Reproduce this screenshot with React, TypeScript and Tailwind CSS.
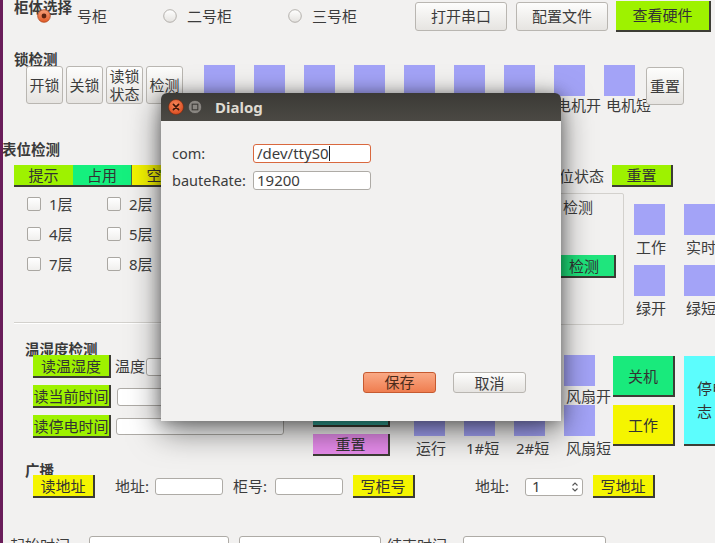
import React from "react";

type P = { children?: React.ReactNode; className?: string };

// Ubuntu-style push button
function QBtn({ children, className = "" }: P) {
  return (
    <div
      className={`flex shrink-0 items-center justify-center rounded-[3px] border border-[#b9b6b1] bg-gradient-to-b from-[#fdfdfc] to-[#e6e4e1] text-[15px] leading-[18px] text-[#3c3c3c] ${className}`}
    >
      {children}
    </div>
  );
}

// flat coloured button with dark lower-right edge
function CBtn({ children, className = "" }: P) {
  return (
    <div
      className={`flex shrink-0 items-center justify-center border-b-2 border-r-2 border-[#3d3d35] text-[15px] leading-[18px] text-[#333] ${className}`}
    >
      {children}
    </div>
  );
}

function Field({ className = "", children }: P) {
  return (
    <div
      className={`flex shrink-0 items-center rounded-[3px] border border-[#aeaba6] bg-white px-[3px] text-[15px] text-[#3c3c3c] ${className}`}
    >
      {children}
    </div>
  );
}

function Radio({ checked = false, className = "" }: { checked?: boolean; className?: string }) {
  return (
    <svg width="14" height="14" viewBox="0 0 14 14" className={`relative z-10 shrink-0 ${className}`}>
      <defs>
        <linearGradient id="ro" x1="0" y1="0" x2="0" y2="1">
          <stop offset="0" stopColor="#f7a07a" />
          <stop offset="1" stopColor="#e15a27" />
        </linearGradient>
        <linearGradient id="rw" x1="0" y1="0" x2="0" y2="1">
          <stop offset="0" stopColor="#ffffff" />
          <stop offset="1" stopColor="#e4e2df" />
        </linearGradient>
      </defs>
      {checked ? (
        <>
          <circle cx="7" cy="7" r="6.3" fill="url(#ro)" stroke="#b04a20" strokeWidth="0.8" />
          <circle cx="7" cy="7" r="2.4" fill="#5b2310" />
        </>
      ) : (
        <circle cx="7" cy="7" r="6.3" fill="url(#rw)" stroke="#a3a09b" strokeWidth="0.8" />
      )}
    </svg>
  );
}

function Check({ label }: { label: string }) {
  return (
    <div className="flex items-center">
      <div className="h-[14px] w-[14px] shrink-0 rounded-[2px] border border-[#aaa7a2] bg-gradient-to-b from-white to-[#f0efed]" />
      <span className="ml-[8px] leading-[14px]">{label}</span>
    </div>
  );
}

function Sq({ className = "" }: { className?: string }) {
  return <div className={`h-[31px] w-[31px] shrink-0 bg-[#a3a3f7] ${className}`} />;
}

function SqLabel({ children, className = "" }: P) {
  return <div className={`h-[16px] w-[31px] whitespace-nowrap pl-[2px] leading-[16px] ${className}`}>{children}</div>;
}

function Title({ children, className = "" }: P) {
  return <div className={`h-[14px] shrink-0 text-[14.5px] font-bold leading-[14px] text-[#3a3a3a] ${className}`}>{children}</div>;
}

function Dialog() {
  return (
    <div className="absolute left-[161px] top-[93px] z-20 flex h-[328px] w-[400px] flex-col overflow-hidden rounded-t-[6px] shadow-[0_10px_32px_rgba(0,0,0,0.55),0_0_14px_rgba(0,0,0,0.3)]">
      <div className="flex h-[28px] shrink-0 items-center bg-gradient-to-b from-[#3b3a36] to-[#4b4944] pl-[7px]">
        <svg width="16" height="16" viewBox="0 0 16 16">
          <defs>
            <radialGradient id="cl" cx="0.45" cy="0.35" r="0.7">
              <stop offset="0" stopColor="#f6875a" />
              <stop offset="1" stopColor="#d9481c" />
            </radialGradient>
          </defs>
          <circle cx="8" cy="8" r="7.5" fill="url(#cl)" stroke="#6e2a12" strokeWidth="0.6" />
          <path d="M5.4 5.4 L10.6 10.6 M10.6 5.4 L5.4 10.6" stroke="#3b1508" strokeWidth="1.6" strokeLinecap="round" />
        </svg>
        <svg width="14" height="14" viewBox="0 0 14 14" className="ml-[4px]">
          <circle cx="7" cy="7" r="6.6" fill="#8a8782" stroke="#3a3935" strokeWidth="0.6" />
          <rect x="4.2" y="4.2" width="5.6" height="5.6" fill="none" stroke="#3c3b37" strokeWidth="1.1" />
        </svg>
        <span className="ml-[13px] text-[15px] font-bold text-[#dfdbd2]">Dialog</span>
      </div>
      <div className="flex flex-1 flex-col bg-[#f2f1f0] px-[11px] pt-[23px] text-[#3c3c3c]">
        <div className="flex h-[19px] items-center">
          <span className="w-[81px] text-[14.5px]">com:</span>
          <div className="flex h-[19px] w-[118px] items-center rounded-[3px] border border-[#d9683e] bg-white px-[3px] text-[15px]">
            /dev/ttyS0
            <span className="ml-px h-[15px] w-px bg-[#222]" />
          </div>
        </div>
        <div className="mt-[8px] flex h-[19px] items-center">
          <span className="w-[81px] text-[14.5px]">bauteRate:</span>
          <Field className="h-[19px] w-[118px]">19200</Field>
        </div>
        <div className="mt-[182px] flex justify-end gap-[17px] pr-[24px]">
          <div className="flex h-[21px] w-[73px] items-center justify-center rounded-[3px] border border-[#c65a30] bg-gradient-to-b from-[#f9a985] to-[#ef7d4f] text-[15px] text-[#4a2a1a]">
            保存
          </div>
          <QBtn className="h-[21px] w-[73px]">取消</QBtn>
        </div>
      </div>
    </div>
  );
}

export default function App() {
  return (
    <div className="relative flex h-[543px] w-[715px] overflow-hidden bg-[#f2f1f0] font-['Noto_Sans','Noto_Sans_CJK_SC',sans-serif] text-[15px] text-[#3c3c3c]">
      <div className="w-[3px] shrink-0 bg-[#6a1d5a]" />
      <div className="relative flex min-w-0 flex-1 flex-col pl-px">
        {/* 柜体选择 */}
        <div className="relative flex h-[32px] shrink-0 items-center">
          <span className="absolute left-[10px] top-[-2px] text-[14.5px] font-bold leading-[18px] text-[#3a3a3a]">柜体选择</span>
          <Radio checked className="ml-[33px]" />
          <span className="ml-[26px] w-[30px] whitespace-nowrap">号柜</span>
          <Radio className="ml-[56px]" />
          <span className="ml-[10px] w-[46px] whitespace-nowrap">二号柜</span>
          <Radio className="ml-[55px]" />
          <span className="ml-[10px] w-[46px] whitespace-nowrap">三号柜</span>
          <QBtn className="ml-[57px] h-[29px] w-[92px]">打开串口</QBtn>
          <QBtn className="ml-[9px] h-[29px] w-[92px]">配置文件</QBtn>
          <CBtn className="ml-[8px] h-[31px] w-[95px] bg-[#9ef200]">查看硬件</CBtn>
        </div>

        {/* 锁检测 */}
        <Title className="mt-[20px] pl-[10px]">锁检测</Title>
        <div className="flex h-[39px] shrink-0 items-start">
          <div className="ml-[22px] flex gap-[3px]">
            <QBtn className="h-[38px] w-[37px]">开锁</QBtn>
            <QBtn className="h-[38px] w-[37px]">关锁</QBtn>
            <QBtn className="h-[38px] w-[37px] flex-col">
              <span>读锁</span>
              <span>状态</span>
            </QBtn>
            <QBtn className="h-[38px] w-[37px]">检测</QBtn>
          </div>
          <div className="-mt-px ml-[21px] flex gap-[19px]">
            {["", "", "", "", "", "", "", "电机开", "电机短"].map((l, i) => (
              <div key={i} className="flex w-[31px] flex-col">
                <Sq />
                <SqLabel className="mt-px">{l}</SqLabel>
              </div>
            ))}
          </div>
          <QBtn className="ml-[11px] mt-px h-[38px] w-[38px]">重置</QBtn>
        </div>

        {/* 表位检测 */}
        <div className="-ml-[2px] mt-[36px] h-[16px] shrink-0 text-[14.5px] font-bold leading-[16px] text-[#3a3a3a]">表位检测</div>
        <div className="mt-[8px] flex h-[22px] shrink-0 items-stretch">
          <div className="ml-[10px] flex border-b-2 border-[#3d3d35]">
            <div className="flex w-[59px] items-center justify-center bg-[#9ef200] text-[#333]">提示</div>
            <div className="flex w-[59px] items-center justify-center border-r border-[#4a6a4a] bg-[#15f07e] text-[#333]">占用</div>
            <div className="flex w-[59px] items-center justify-center bg-[#f5f500] text-[#333]">空闲</div>
          </div>
          <span className="ml-[368px] w-[44px] self-center whitespace-nowrap">位状态</span>
          <CBtn className="ml-[9px] w-[61px] bg-[#9ef200]">重置</CBtn>
        </div>
        <div className="mt-[6px] flex h-[132px] shrink-0">
          <div className="flex w-[157px] shrink-0 flex-col">
            <div className="grid grid-cols-[80px_80px] gap-y-[16px] pl-[23px] pt-[4px]">
              {["1层", "2层", "4层", "5层", "7层", "8层"].map((l) => (
                <Check key={l} label={l} />
              ))}
            </div>
            <div className="mb-[1px] ml-[10px] mt-auto border-b border-t border-b-white border-t-[#d3d1cd]" />
          </div>
          <div className="ml-[379px] flex h-[132px] w-[84px] shrink-0 flex-col rounded-[2px] border border-[#d3d1cd]">
            <span className="pl-[22px] pt-[5px] leading-[16px]">检测</span>
            <CBtn className="ml-[13px] mt-[40px] h-[23px] w-[62px] bg-[#1fe57d]">检测</CBtn>
          </div>
          <div className="ml-[10px] flex gap-[19px]">
            {[
              ["工作", "绿开"],
              ["实时", "绿短"],
            ].map(([a, b]) => (
              <div key={a} className="flex w-[31px] flex-col">
                <Sq className="mt-[11px]" />
                <SqLabel className="mt-[4px]">{a}</SqLabel>
                <Sq className="mt-[10px]" />
                <SqLabel className="mt-[4px]">{b}</SqLabel>
              </div>
            ))}
          </div>
        </div>

        {/* 温湿度检测 */}
        <Title className="mt-[17px] pl-[21px]">温湿度检测</Title>
        <div className="-mt-px flex h-[101px] shrink-0 items-start">
          <div className="ml-[29px] flex w-[251px] shrink-0 flex-col gap-[7px]">
            <div className="flex items-center">
              <CBtn className="h-[23px] w-[78px] bg-[#9ef200]">读温湿度</CBtn>
              <span className="ml-[4px] w-[31px] whitespace-nowrap">温度</span>
              <Field className="h-[18px] w-[40px]" />
            </div>
            <div className="flex items-center">
              <CBtn className="h-[23px] w-[78px] bg-[#9ef200]">读当前时间</CBtn>
              <Field className="ml-[6px] h-[18px] w-[120px]" />
            </div>
            <div className="flex items-center">
              <CBtn className="h-[23px] w-[78px] bg-[#9ef200]">读停电时间</CBtn>
              <Field className="ml-[5px] h-[17px] w-[168px]" />
            </div>
          </div>
          <div className="ml-[29px] flex w-[77px] shrink-0 flex-col pt-[50px]">
            <CBtn className="h-[22px] w-[77px] bg-[#36b3a3]" />
            <CBtn className="mt-[7px] h-[22px] w-[77px] bg-[#e78cec]">重置</CBtn>
          </div>
          <div className="ml-[24px] flex gap-[19px]">
            {[
              ["", "运行"],
              ["", "1#短"],
              ["", "2#短"],
              ["风扇开", "风扇短"],
            ].map(([a, b]) => (
              <div key={b} className="flex w-[31px] flex-col">
                <Sq />
                <SqLabel className="mt-[2px]">{a}</SqLabel>
                <Sq className="mt-px" />
                <SqLabel className="mt-[4px]">{b}</SqLabel>
              </div>
            ))}
          </div>
          <div className="ml-[18px] flex w-[62px] shrink-0 flex-col">
            <CBtn className="mt-px h-[41px] w-[62px] bg-[#19ea7c]">关机</CBtn>
            <CBtn className="mt-[8px] h-[41px] w-[62px] bg-[#f5f500]">工作</CBtn>
          </div>
          <div className="ml-[9px] mt-px flex h-[90px] w-[40px] shrink-0 flex-col justify-center overflow-hidden whitespace-nowrap border-b-2 border-[#3d3d35] bg-[#5cfdfd] pl-[13px] leading-[23px] text-[#333]">
            <span>停电</span>
            <span>志</span>
          </div>
        </div>

        {/* 广播 */}
        <Title className="mt-[7px] pl-[21px]">广播</Title>
        <div className="-mt-[2px] flex h-[23px] shrink-0 items-center">
          <CBtn className="ml-[29px] h-[23px] w-[62px] bg-[#f5f500]">读地址</CBtn>
          <span className="ml-[20px] w-[40px] whitespace-nowrap">地址:</span>
          <Field className="h-[17px] w-[68px]" />
          <span className="ml-[10px] w-[42px] whitespace-nowrap">柜号:</span>
          <Field className="h-[17px] w-[68px]" />
          <CBtn className="ml-[10px] h-[23px] w-[62px] bg-[#f5f500]">写柜号</CBtn>
          <span className="ml-[60px] w-[50px] whitespace-nowrap">地址:</span>
          <Field className="h-[18px] w-[58px] justify-between pl-[6px] pr-[3px]">
            <span>1</span>
            <svg width="8" height="12" viewBox="0 0 8 12">
              <path d="M1.5 4.5 L4 2 L6.5 4.5 M1.5 7.5 L4 10 L6.5 7.5" fill="none" stroke="#555" strokeWidth="1.1" />
            </svg>
          </Field>
          <CBtn className="ml-[10px] h-[23px] w-[62px] bg-[#f5f500]">写地址</CBtn>
        </div>

        {/* bottom row (cut off by window) */}
        <div className="mt-[38px] flex shrink-0 items-start leading-[18px]">
          <span className="ml-[6px] w-[79px] whitespace-nowrap">起始时间:</span>
          <Field className="h-[22px] w-[140px] items-start pt-[2px]">&nbsp;</Field>
          <Field className="ml-[10px] h-[22px] w-[142px] items-start pt-[2px]">2000/1/1 0:00:00</Field>
          <span className="ml-[6px] w-[76px] whitespace-nowrap">结束时间:</span>
          <Field className="h-[22px] w-[143px] items-start pt-[2px]">&nbsp;</Field>
        </div>
      </div>
      <Dialog />
    </div>
  );
}
